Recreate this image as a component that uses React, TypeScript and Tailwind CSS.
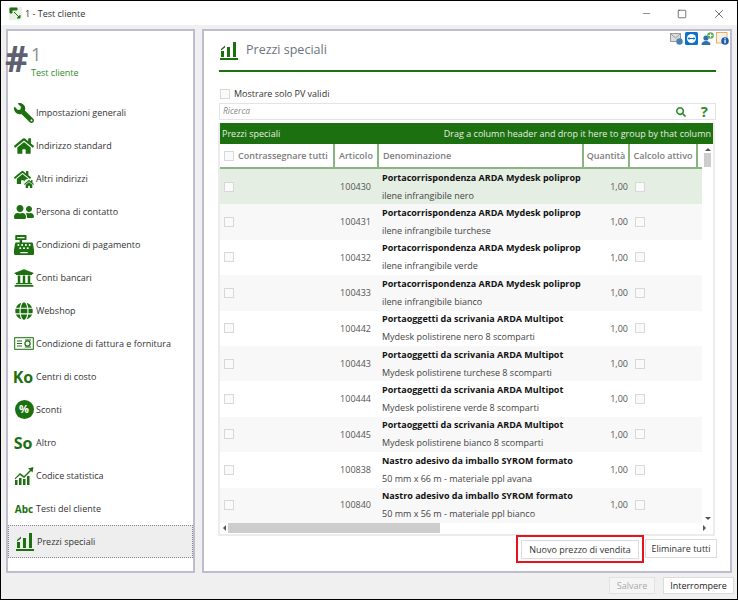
import { FaHome, FaWrench, FaCashRegister, FaUniversity, FaGlobe, FaUserFriends, FaSearch } from "react-icons/fa";
import { Minus, Square, X } from "lucide-react";
import type { ReactNode } from "react";

const GREEN = "#1c7010";

function BarsIcon({ className }: { className?: string }) {
  return (
    <svg viewBox="0 0 20 20" className={className} fill="#1c7010">
      <rect x="1" y="17" width="18" height="2" />
      <rect x="2" y="10" width="3" height="6" />
      <rect x="8" y="6" width="3" height="10" />
      <rect x="14" y="1" width="3" height="15" />
      <path d="M2 8 L6 4.5 L6 6.5 L2 9.5 Z" />
    </svg>
  );
}

function StatsIcon() {
  return (
    <svg viewBox="0 0 20 20" className="w-5 h-5" fill="#1c7010">
      <rect x="1" y="14" width="2.5" height="5" />
      <rect x="5" y="12" width="2.5" height="7" />
      <rect x="9" y="13" width="2.5" height="6" />
      <rect x="13" y="10" width="2.5" height="9" />
      <path d="M1 12 L6 7 L10 10 L16 4 L14 2.5 L19.5 1 L18.5 6.5 L17 5 L10 12 L6 9 L1 13.5 Z" />
    </svg>
  );
}

function InvoiceIcon() {
  return (
    <svg viewBox="0 0 20 14" className="w-5 h-[14px]" fill="none" stroke="#1c7010">
      <rect x="0.7" y="0.7" width="18.6" height="11.6" strokeWidth="1" />
      <path d="M3 4h5M3 6.5h5M3 9h5" strokeWidth="1" />
      <circle cx="13.5" cy="6.5" r="2.6" strokeWidth="1.2" />
      <path d="M11 3h6M11 10h6" strokeWidth="1" />
    </svg>
  );
}

function AltriIcon() {
  return (
    <span className="relative block w-5 h-5">
      <FaHome className="w-[17px] h-[17px] text-[#1c7010]" />
      <FaHome className="absolute right-0 bottom-0 w-[10px] h-[10px] text-[#1c7010] bg-white rounded-sm" />
    </span>
  );
}

function DiscountIcon() {
  return (
    <span className="flex items-center justify-center w-[19px] h-[19px] rounded-full bg-[#1c7010] text-white text-[11px] font-bold">
      %
    </span>
  );
}

const MENU: { label: string; icon: ReactNode }[] = [
  { label: "Impostazioni generali", icon: <FaWrench className="w-5 h-5 text-[#1c7010] -scale-x-100" /> },
  { label: "Indirizzo standard", icon: <FaHome className="w-5 h-5 text-[#1c7010]" /> },
  { label: "Altri indirizzi", icon: <AltriIcon /> },
  { label: "Persona di contatto", icon: <FaUserFriends className="w-5 h-5 text-[#1c7010]" /> },
  { label: "Condizioni di pagamento", icon: <FaCashRegister className="w-5 h-5 text-[#1c7010]" /> },
  { label: "Conti bancari", icon: <FaUniversity className="w-5 h-5 text-[#1c7010]" /> },
  { label: "Webshop", icon: <FaGlobe className="w-[18px] h-[18px] text-[#1c7010]" /> },
  { label: "Condizione di fattura e fornitura", icon: <InvoiceIcon /> },
  { label: "Centri di costo", icon: <span className="text-[16px] font-bold text-[#1c7010] leading-none -ml-[2px]">Ko</span> },
  { label: "Sconti", icon: <DiscountIcon /> },
  { label: "Altro", icon: <span className="text-[16px] font-bold text-[#1c7010] leading-none -ml-[2px]">So</span> },
  { label: "Codice statistica", icon: <StatsIcon /> },
  { label: "Testi del cliente", icon: <span className="text-[10px] font-bold text-[#1c7010] leading-none">Abc</span> },
  { label: "Prezzi speciali", icon: <BarsIcon className="w-5 h-5" /> },
];

const ROWS = [
  ["100430", "Portacorrispondenza ARDA Mydesk poliprop", "ilene infrangibile nero"],
  ["100431", "Portacorrispondenza ARDA Mydesk poliprop", "ilene infrangibile turchese"],
  ["100432", "Portacorrispondenza ARDA Mydesk poliprop", "ilene infrangibile verde"],
  ["100433", "Portacorrispondenza ARDA Mydesk poliprop", "ilene infrangibile bianco"],
  ["100442", "Portaoggetti da scrivania ARDA Multipot", "Mydesk polistirene nero 8 scomparti"],
  ["100443", "Portaoggetti da scrivania ARDA Multipot", "Mydesk polistirene turchese 8 scomparti"],
  ["100444", "Portaoggetti da scrivania ARDA Multipot", "Mydesk polistirene verde 8 scomparti"],
  ["100445", "Portaoggetti da scrivania ARDA Multipot", "Mydesk polistirene bianco 8 scomparti"],
  ["100838", "Nastro adesivo da imballo SYROM formato", "50 mm x 66 m - materiale ppl avana"],
  ["100840", "Nastro adesivo da imballo SYROM formato", "50 mm x 56 m - materiale ppl bianco"],
];

function Check() {
  return <span className="block w-[10px] h-[10px] border border-[#d8d8d8] bg-[#fafafa]" />;
}

function Sidebar() {
  return (
    <aside className="w-[189px] h-[544px] border-2 border-[#bdbdcf] bg-white shrink-0">
      <div className="h-[65px] flex pt-[13px] text-[#5f5f73]">
        <span className="text-[36px] leading-[30px] font-bold -ml-[3px] w-[26px]">#</span>
        <div className="flex flex-col">
          <span className="text-[18px] leading-[20px] text-[#8a8a8a]">1</span>
          <span className="text-[9px] leading-[14px] text-[#2f8a2a] mt-[2px]">Test cliente</span>
        </div>
      </div>
      <nav className="flex flex-col">
        {MENU.map((m, i) => (
          <div
            key={m.label}
            className={`h-[33px] flex items-center pl-[4px] text-[9px] text-[#333] ${
              i === MENU.length - 1 ? "bg-[#eeeeee] border border-dotted border-[#888]" : ""
            }`}
          >
            <span className="w-[24px] shrink-0 flex items-center justify-center">{m.icon}</span>
            <span>{m.label}</span>
          </div>
        ))}
      </nav>
    </aside>
  );
}

function TopIcons() {
  return (
    <div className="flex justify-end gap-[2.5px] pr-[1px] pt-[1px] h-[14px]">
      <svg viewBox="0 0 13 13" className="w-[13px] h-[13px]">
        <rect x="0.5" y="1.5" width="10" height="8" fill="#ddd" stroke="#999" />
        <path d="M1 2l4.5 4L10 2" fill="none" stroke="#999" />
        <circle cx="9.5" cy="9.5" r="3.2" fill="#4a7fb5" />
      </svg>
      <svg viewBox="0 0 13 13" className="w-[13px] h-[13px]">
        <rect width="13" height="13" rx="1.5" fill="#0e72c8" />
        <circle cx="6.5" cy="6.5" r="4.5" fill="#fff" />
        <path d="M2.5 6.5l2-1.5v1h4v-1l2 1.5-2 1.5v-1h-4v1z" fill="#0e72c8" />
      </svg>
      <svg viewBox="0 0 13 13" className="w-[13px] h-[13px]">
        <circle cx="5" cy="6" r="2.6" fill="#2f6fae" />
        <path d="M0.5 13c0-3 2-4 4.5-4s4.5 1 4.5 4z" fill="#2f6fae" />
        <circle cx="9.5" cy="3.5" r="3.3" fill="#5cae5a" />
        <path d="M9.5 1.5v4M7.5 3.5h4" stroke="#fff" />
      </svg>
      <svg viewBox="0 0 13 13" className="w-[13px] h-[13px]">
        <rect x="0.5" y="0.5" width="10.5" height="10.5" fill="#f4f1e8" stroke="#e8b060" />
        <circle cx="9" cy="9" r="3.8" fill="#1d5fa5" />
        <rect x="8.4" y="7.8" width="1.3" height="3.4" fill="#fff" />
        <rect x="8.4" y="6.2" width="1.3" height="1.1" fill="#fff" />
      </svg>
    </div>
  );
}

function Table() {
  return (
    <div className="w-[497px] border-b-2 border-x-2 border-[#ececec] mt-[3px] -ml-[1px]">
      <div
        className="h-[21px] flex items-center justify-between px-[2px] text-[9px] font-medium text-[#e6efe3]"
        style={{ backgroundColor: GREEN }}
      >
        <span>Prezzi speciali</span>
        <span>Drag a column header and drop it here to group by that column</span>
      </div>
      <div className="flex">
        <div className="w-[482px]">
          <div className="h-[25px] flex items-center text-[9px] font-semibold text-[#7d7d7d] border-b-2 border-[#8ab583]">
            <div className="w-[115px] h-full flex items-center gap-[4px] pl-[4px] border-r-2 border-[#8ab583]">
              <Check />
              <span className="whitespace-nowrap">Contrassegnare tutti</span>
            </div>
            <div className="w-[44px] h-full flex items-center pl-[4px] border-r-2 border-[#8ab583]">Articolo</div>
            <div className="w-[205px] h-full flex items-center pl-[4px] border-r-2 border-[#8ab583]">Denominazione</div>
            <div className="w-[46px] h-full flex items-center justify-center border-r-2 border-[#8ab583]">Quantità</div>
            <div className="w-[68px] h-full flex items-center justify-center border-r-2 border-[#8ab583] whitespace-nowrap">Calcolo attivo</div>
          </div>
          {ROWS.map((r, i) => (
            <div
              key={r[0]}
              className={`h-[35.4px] flex items-center text-[9px] text-[#444] ${
                i === 0 ? "bg-[#e5eee3]" : i % 2 === 1 ? "bg-[#f8f8f8]" : "bg-white"
              }`}
            >
              <div className="w-[115px] pl-[4px]">
                <Check />
              </div>
              <div className="w-[44px] text-right pr-[8px] text-[#555]">{r[0]}</div>
              <div className="w-[205px] pl-[3px] leading-[18px] whitespace-nowrap">
                <div className="font-bold text-[#111]">{r[1]}</div>
                <div>{r[2]}</div>
              </div>
              <div className="w-[46px] text-right pr-[2px] text-[#555]">1,00</div>
              <div className="w-[68px] pl-[5px]">
                <Check />
              </div>
            </div>
          ))}
        </div>
        <div className="flex-1 flex flex-col items-center justify-between px-[2px] pb-[3px] pt-[2px]">
          <div className="w-full flex flex-col items-center">
            <span className="block border-x-[3px] border-x-transparent border-b-[3px] border-b-[#555] mt-[2px]" />
            <span className="block w-full h-[14px] bg-[#cdcdcd] mt-[2px]" />
          </div>
          <span className="block border-x-[3px] border-x-transparent border-t-[3px] border-t-[#555]" />
        </div>
      </div>
      <div className="h-[11px] flex items-center px-[3px] bg-white">
        <span className="block border-y-[3px] border-y-transparent border-r-[3px] border-r-[#555]" />
        <span className="block w-[212px] h-[10px] bg-[#cdcdcd] ml-[2px]" />
        <span className="block border-y-[3px] border-y-transparent border-l-[3px] border-l-[#555] ml-auto mr-[4px]" />
      </div>
    </div>
  );
}

function Content() {
  return (
    <main className="w-[530px] h-[544px] border-2 border-[#bdbdcf] bg-white flex flex-col pl-[15px] pr-[14px]">
      <div className="-mr-[14px]">
        <TopIcons />
      </div>
      <div className="flex items-center gap-[7px] h-[25px] mt-[-7px]">
        <BarsIcon className="w-5 h-5" />
        <span className="text-[12.5px] text-[#6a7480]">Prezzi speciali</span>
      </div>
      <div className="h-[2px] mt-[7px] bg-[#1c7010]" />
      <label className="flex items-center gap-[4px] mt-[16px] h-[12px] text-[9px] text-[#333] pl-[1px]">
        <Check />
        <span>Mostrare solo PV validi</span>
      </label>
      <div className="h-[17px] mt-[3px] border border-[#e4e4e4] flex items-center pl-[3px] pr-[7px] text-[8.5px] italic text-[#888]">
        <span>Ricerca</span>
        <FaSearch className="ml-auto w-[10px] h-[10px] text-[#2d8a2a]" />
        <span className="ml-[15px] text-[15px] not-italic font-bold text-[#2d8a2a] leading-none">?</span>
      </div>
      <Table />
      <div className="flex justify-end items-center -mt-[1px] -mr-[1px] text-[9px] text-[#333]">
        <div className="border-[2px] border-[#e8141c] px-[3px] pt-[3px] pb-[2px]">
          <button className="block h-[19px] w-[118px] border border-[#dcdcdc] bg-white">Nuovo prezzo di vendita</button>
        </div>
        <button className="h-[19px] w-[72px] ml-[1px] border border-[#dcdcdc] bg-white">Eliminare tutti</button>
      </div>
    </main>
  );
}

export default function App() {
  return (
    <div className="w-[738px] h-[600px] border border-black bg-[#f0f0f0] flex flex-col font-['Open_Sans',sans-serif] overflow-hidden">
      <header className="h-[24px] pt-[1px] bg-white flex items-center shrink-0 pl-[8px] text-[9px] text-[#333]">
        <span className="w-[13px] h-[13px] flex items-center justify-center bg-[#eaf2e8]">
          <svg viewBox="0 0 13 13" className="w-[13px] h-[13px]">
            <path d="M1 1h7v2H3v3H1zM5 5l6 6M8 11h3V8" fill="#1c7010" stroke="#1c7010" />
          </svg>
        </span>
        <span className="ml-[3px]">1 - Test cliente</span>
        <div className="ml-auto flex items-center text-[#333]">
          <span className="w-[35px] flex justify-center"><Minus className="w-[11px] h-[11px]" strokeWidth={1.2} /></span>
          <span className="w-[36px] flex justify-center"><Square className="w-[10px] h-[10px]" strokeWidth={1.6} /></span>
          <span className="w-[37px] flex justify-center"><X className="w-[14px] h-[14px]" strokeWidth={1.2} /></span>
        </div>
      </header>
      <div className="flex gap-[7px] pl-[5px] pt-[4px]">
        <Sidebar />
        <Content />
      </div>
      <footer className="flex justify-end gap-[8px] pr-[3px] pt-[4px] text-[9px]">
        <button className="h-[17px] w-[46px] border border-[#e2e2e2] bg-[#f5f5f5] text-[#aaa]">Salvare</button>
        <button className="h-[17px] w-[71px] border border-[#dcdcdc] bg-white text-[#222]">Interrompere</button>
      </footer>
    </div>
  );
}
